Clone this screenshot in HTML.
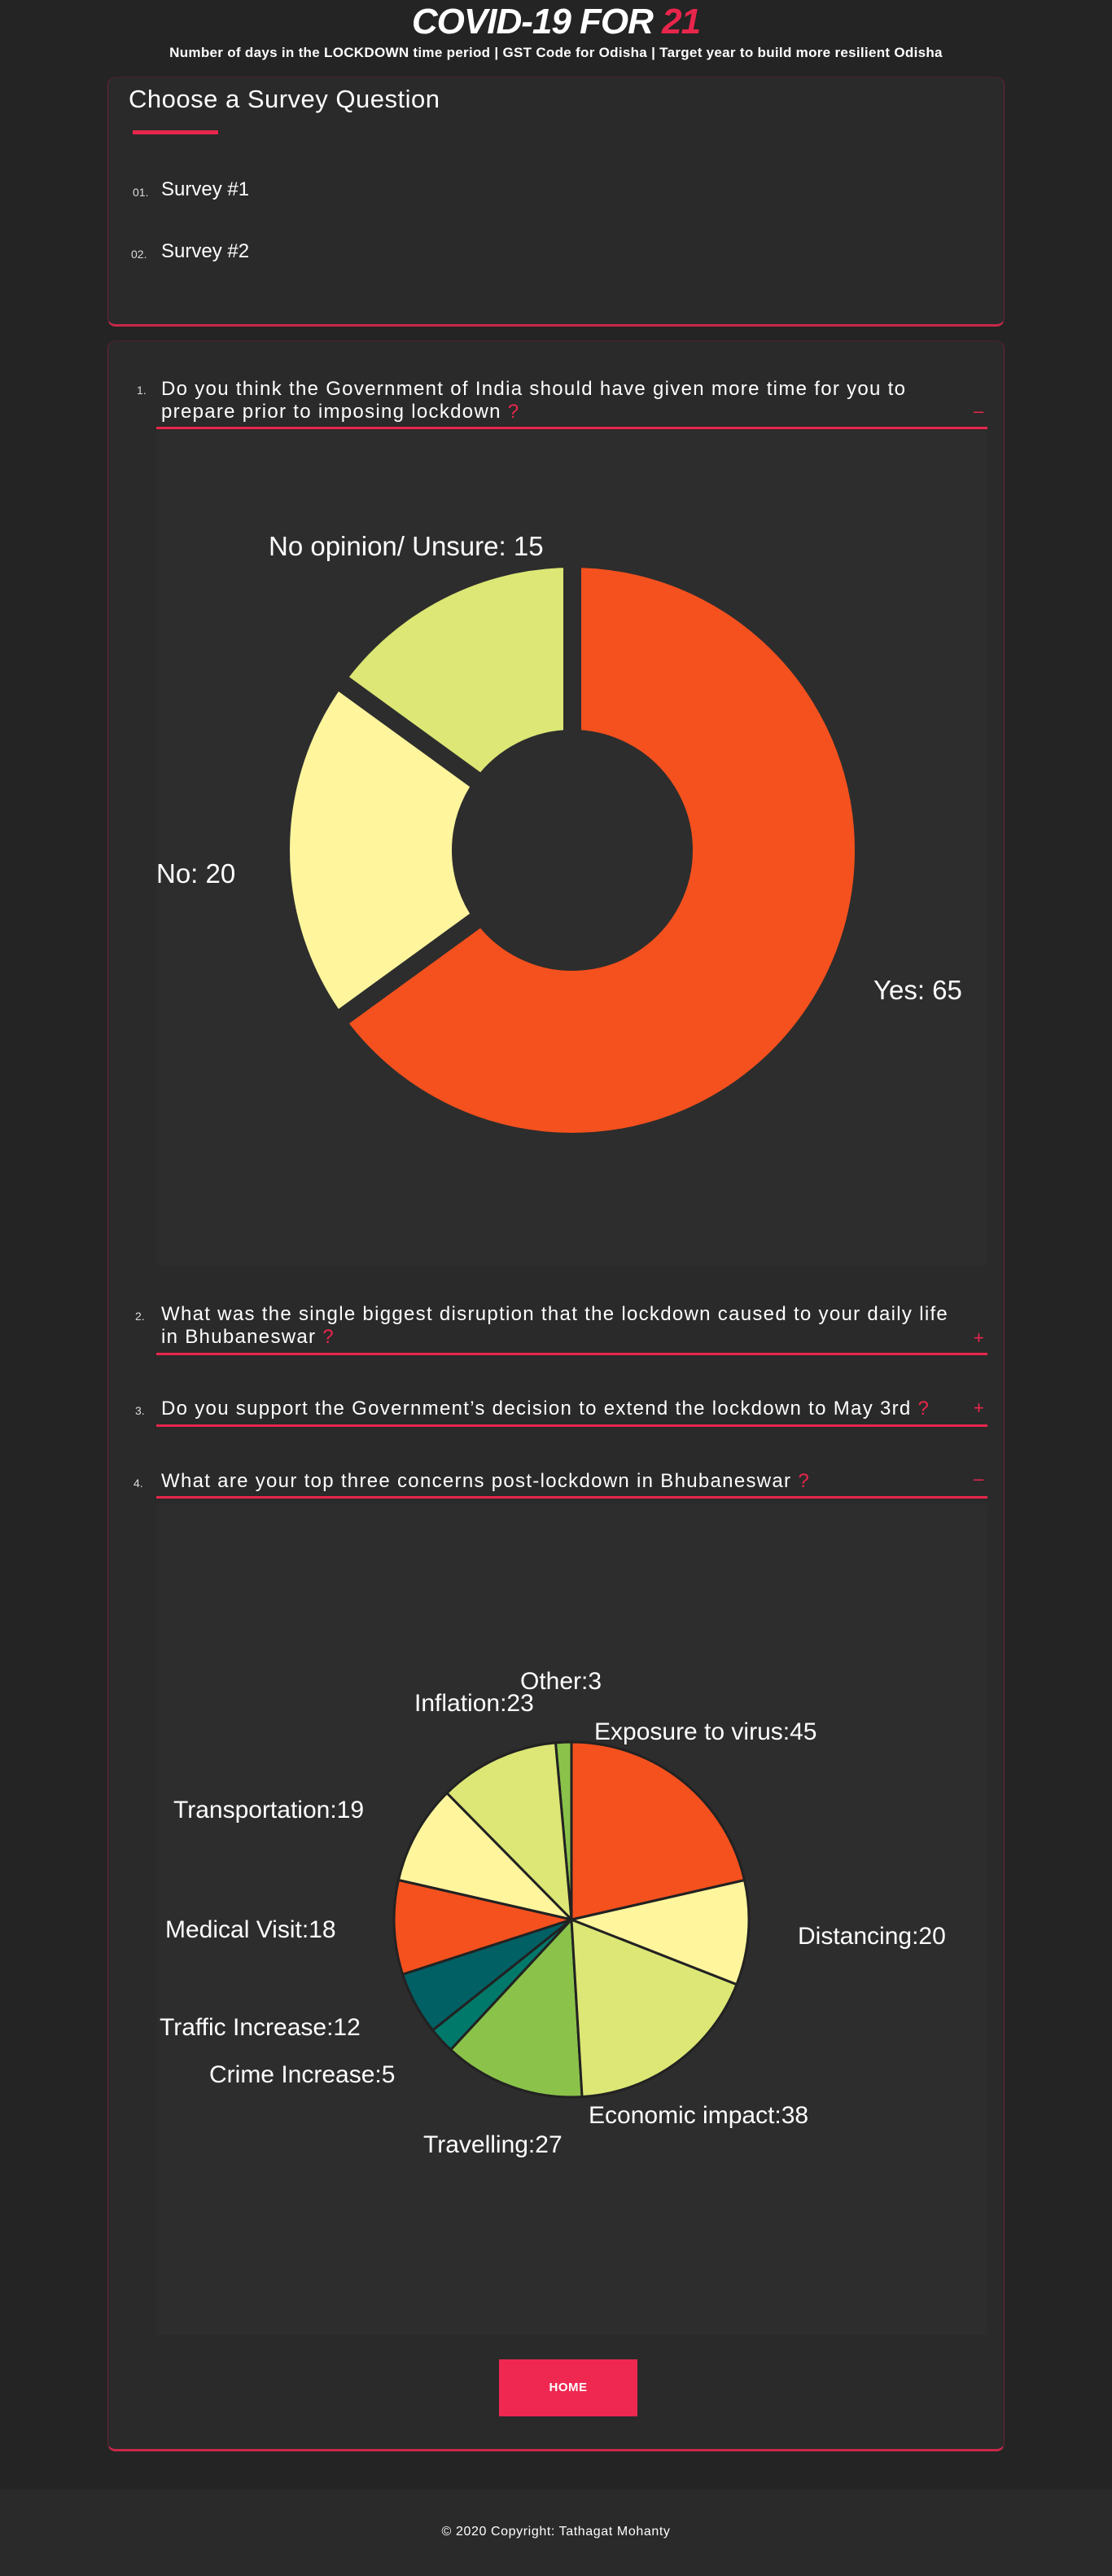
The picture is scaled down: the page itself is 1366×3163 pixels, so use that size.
<!DOCTYPE html>
<html><head><meta charset="utf-8">
<style>
*{margin:0;padding:0;box-sizing:border-box}
body{width:1366px;height:3163px;background:#242424;font-family:"Liberation Sans",sans-serif;color:#fff;position:relative;overflow:hidden}
.abs{position:absolute;white-space:nowrap}
.card{position:absolute;left:132px;width:1102px;background:#2a2a2a;border:1px solid #6a2233;border-top-color:#4a2029;border-bottom:3px solid #c8284a;border-radius:10px}
.q{font-size:24px;color:#fff;line-height:28px;letter-spacing:1.3px}
.num{font-size:14px;color:#ddd}
.red{color:#e8264c}
.ul{position:absolute;left:192px;width:1021px;height:3px;background:#e8264c}
.chart{position:absolute;left:192px;width:1021px;background:#2d2d2d}
</style></head><body>
<div class="abs" style="left:0;width:1366px;top:2px;text-align:center;font-size:44px;font-weight:bold;font-style:italic;letter-spacing:-1px">COVID-19 FOR <span style="color:#e8264c">21</span></div>
<div class="abs" style="left:0;width:1366px;top:55px;text-align:center;font-size:17px;font-weight:bold;letter-spacing:0.3px">Number of days in the LOCKDOWN time period | GST Code for Odisha | Target year to build more resilient Odisha</div>

<div class="card" style="top:94px;height:307px"></div>
<div class="abs" style="left:158px;top:104px;font-size:31px;letter-spacing:0.5px">Choose a Survey Question</div>
<div class="abs" style="left:163px;top:160px;width:105px;height:5px;background:#e8264c"></div>
<div class="abs num" style="left:163px;top:228px">01.</div>
<div class="abs" style="left:198px;top:219px;font-size:24px">Survey #1</div>
<div class="abs num" style="left:161px;top:304px">02.</div>
<div class="abs" style="left:198px;top:295px;font-size:24px">Survey #2</div>

<div class="card" style="top:418px;height:2592px"></div>

<div class="abs num" style="left:168px;top:471px">1.</div>
<div class="abs q" style="left:198px;top:464px">Do you think the Government of India should have given more time for you to<br>prepare prior to imposing lockdown <span class="red">?</span></div>
<div class="abs red" style="left:1196px;top:492px;font-size:22px">–</div>
<div class="ul" style="top:524px"></div>
<div class="chart" style="top:529px;height:1025px"></div>

<div class="abs num" style="left:166px;top:1608px">2.</div>
<div class="abs q" style="left:198px;top:1600px">What was the single biggest disruption that the lockdown caused to your daily life<br>in Bhubaneswar <span class="red">?</span></div>
<div class="abs red" style="left:1196px;top:1630px;font-size:22px">+</div>
<div class="ul" style="top:1661px"></div>

<div class="abs num" style="left:166px;top:1724px">3.</div>
<div class="abs q" style="left:198px;top:1716px">Do you support the Government’s decision to extend the lockdown to May 3rd <span class="red">?</span></div>
<div class="abs red" style="left:1196px;top:1716px;font-size:22px">+</div>
<div class="ul" style="top:1749px"></div>

<div class="abs num" style="left:164px;top:1813px">4.</div>
<div class="abs q" style="left:198px;top:1805px">What are your top three concerns post-lockdown in Bhubaneswar <span class="red">?</span></div>
<div class="abs red" style="left:1196px;top:1803px;font-size:22px">–</div>
<div class="ul" style="top:1837px"></div>
<div class="chart" style="top:1847px;height:1020px"></div>

<div class="abs" style="left:613px;top:2897px;width:170px;height:70px;background:#ee2851;text-align:center;line-height:70px;font-size:15px;font-weight:bold;letter-spacing:0.5px">HOME</div>

<div class="abs" style="left:0;top:3057px;width:1366px;height:106px;background:#2a2a2a"></div>
<div class="abs" style="left:0;width:1366px;top:3100px;text-align:center;font-size:16px;letter-spacing:0.6px">© 2020 Copyright: Tathagat Mohanty</div>

<svg class="abs" style="left:0;top:0" width="1366" height="3163" id="sv">
<g id="lab" font-family="Liberation Sans, sans-serif" fill="#fff">
<text x="330" y="682" font-size="33">No opinion/ Unsure: 15</text>
<text x="192" y="1084" font-size="33">No: 20</text>
<text x="1073" y="1227" font-size="33">Yes: 65</text>
<g font-size="30">
<text x="639" y="2074">Other:3</text>
<text x="509" y="2101">Inflation:23</text>
<text x="730" y="2136">Exposure to virus:45</text>
<text x="213" y="2232">Transportation:19</text>
<text x="980" y="2387">Distancing:20</text>
<text x="203" y="2379">Medical Visit:18</text>
<text x="196" y="2499">Traffic Increase:12</text>
<text x="257" y="2557">Crime Increase:5</text>
<text x="723" y="2607">Economic impact:38</text>
<text x="520" y="2643">Travelling:27</text>
</g></g>
</svg>

<script>
(function(){
var sv=document.getElementById('sv'),NS='http://www.w3.org/2000/svg';
function pt(cx,cy,r,a){a=(a-90)*Math.PI/180;return [cx+r*Math.cos(a),cy+r*Math.sin(a)];}
function add(d,fill,stroke,sw){var p=document.createElementNS(NS,'path');p.setAttribute('d',d);p.setAttribute('fill',fill);p.setAttribute('stroke',stroke);p.setAttribute('stroke-width',sw);sv.insertBefore(p,sv.firstChild);}
var cx=703,cy=1044,ro=358,ri=137,a=0;
[[65,'#f4511e'],[20,'#fff59d'],[15,'#dce775']].forEach(function(s){
 var b=a+s[0]*3.6,l=(b-a)>180?1:0,p1=pt(cx,cy,ro,a),p2=pt(cx,cy,ro,b),p3=pt(cx,cy,ri,b),p4=pt(cx,cy,ri,a);
 add('M'+p1+' A'+ro+' '+ro+' 0 '+l+' 1 '+p2+' L'+p3+' A'+ri+' '+ri+' 0 '+l+' 0 '+p4+'Z',s[1],'#2d2d2d',22);a=b;});
cx=702;cy=2357;var r=218;a=0;var tot=210;
[[45,'#f4511e'],[20,'#fff59d'],[38,'#dce775'],[27,'#8bc34a'],[5,'#00796b'],[12,'#006064'],[18,'#f4511e'],[19,'#fff59d'],[23,'#dce775'],[3,'#8bc34a']].forEach(function(s){
 var b=a+s[0]/tot*360,l=(b-a)>180?1:0,p1=pt(cx,cy,r,a),p2=pt(cx,cy,r,b);
 add('M'+cx+','+cy+' L'+p1+' A'+r+' '+r+' 0 '+l+' 1 '+p2+'Z',s[1],'#222',3);a=b;});
})();
</script>
</body></html>
